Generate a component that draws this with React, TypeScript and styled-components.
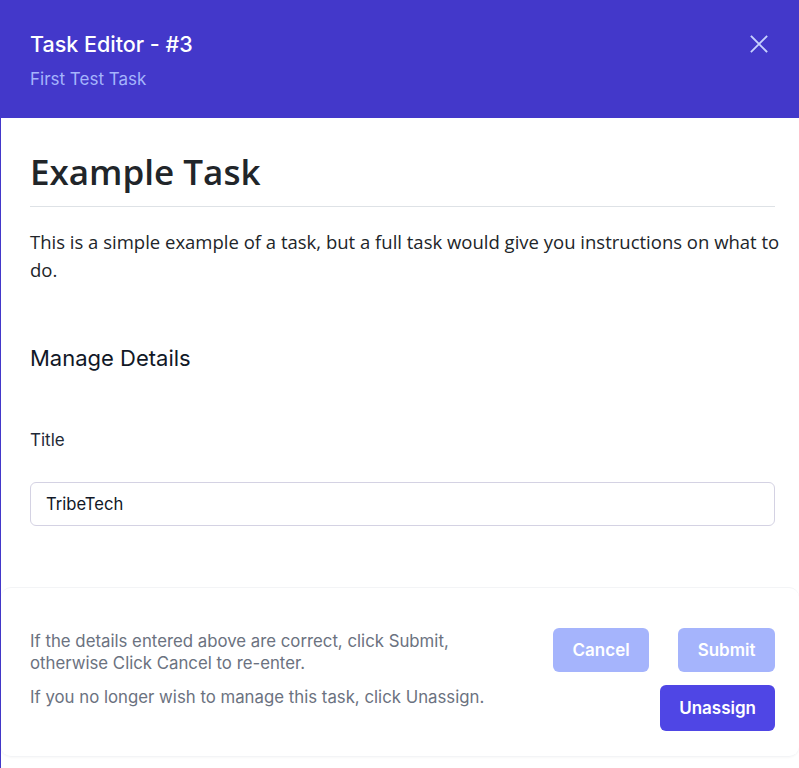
import React from "react";
import styled, { createGlobalStyle } from "styled-components";

const Global = createGlobalStyle`
  html, body { margin: 0; padding: 0; background: #ffffff; }
  body { font-family: Inter, "Noto Sans", sans-serif; -webkit-font-smoothing: antialiased; }
  * { box-sizing: border-box; }
`;

const Shell = styled.div`
  width: 799px;
  min-height: 768px;
  display: flex;
  flex-direction: column;
  background: #ffffff;
`;

const Header = styled.header`
  height: 118px;
  background: #4338ca;
  padding: 30px 30px 0 30px;
  display: flex;
  justify-content: space-between;
  align-items: flex-start;
`;

const HeaderText = styled.div`
  display: flex;
  flex-direction: column;
  gap: 10px;
`;

const HeaderTitle = styled.h2`
  margin: 0;
  font-family: Inter, sans-serif;
  font-size: 21.5px;
  line-height: 28px;
  font-weight: 500;
  color: #ffffff;
`;

const HeaderSub = styled.p`
  margin: 0;
  font-family: Inter, sans-serif;
  font-size: 17px;
  line-height: 22px;
  color: #a5b4fc;
`;

const CloseButton = styled.button`
  border: none;
  background: transparent;
  padding: 0;
  margin: 5px 1px 0 0;
  width: 18px;
  height: 18px;
  display: flex;
  color: #c7d2fe;
  cursor: pointer;
`;

const Body = styled.div`
  flex: 1;
  border-left: 1px solid #4338ca;
  display: flex;
  flex-direction: column;
`;

const Content = styled.main`
  padding: 30px 24px 0 29px;
  display: flex;
  flex-direction: column;
`;

const Heading = styled.h1`
  margin: 0;
  padding-bottom: 10px;
  border-bottom: 1px solid #dee2e6;
  font-family: "Open Sans", "Noto Sans", sans-serif;
  font-size: 35px;
  line-height: 48px;
  font-weight: 600;
  color: #212529;
`;

const Description = styled.p`
  margin: 21px -10px 0 0;
  font-family: "Open Sans", "Noto Sans", sans-serif;
  font-size: 18.5px;
  line-height: 28px;
  color: #212529;
`;

const SectionTitle = styled.h3`
  margin: 60px 0 0 0;
  font-family: Inter, sans-serif;
  font-size: 22px;
  line-height: 28px;
  font-weight: 400;
  color: #111827;
`;

const Label = styled.label`
  margin-top: 56px;
  font-family: Inter, sans-serif;
  font-size: 17px;
  line-height: 24px;
  color: #1f2937;
`;

const TextInput = styled.input`
  margin-top: 30px;
  height: 44px;
  width: 100%;
  padding: 0 15px;
  border: 1px solid #d4d2e3;
  border-radius: 6px;
  font-family: Inter, sans-serif;
  font-size: 16.6px;
  color: #111827;
  background: #ffffff;
  outline: none;
`;

const FooterCard = styled.footer`
  margin-top: 61px;
  border-top: 1px solid #f3f4f6;
  border-bottom: 1px solid #f3f4f6;
  border-radius: 10px;
  box-shadow: 0 1px 2px rgba(0, 0, 0, 0.03);
  padding: 40px 24px 25px 29px;
  display: flex;
  justify-content: space-between;
  align-items: flex-start;
`;

const FooterText = styled.div`
  width: 470px;
  display: flex;
  flex-direction: column;
  gap: 12px;
  font-family: Inter, sans-serif;
  font-size: 16.8px;
  line-height: 22px;
  color: #6b7280;
  margin-top: 2px;
`;

const FooterNote = styled.p`
  margin: 0;
`;

const Actions = styled.div`
  display: flex;
  flex-direction: column;
  align-items: flex-end;
  gap: 13px;
`;

const ActionRow = styled.div`
  display: flex;
  gap: 29px;
`;

const ActionButton = styled.button<{ $variant: "muted" | "primary" }>`
  height: ${(p) => (p.$variant === "primary" ? "46px" : "44px")};
  padding: 0 ${(p) => (p.$variant === "primary" ? "19px" : "19.5px")};
  border: none;
  border-radius: 6px;
  font-family: Inter, sans-serif;
  font-size: 17px;
  font-weight: 600;
  color: #ffffff;
  background: ${(p) => (p.$variant === "primary" ? "#4f46e5" : "#a5b4fc")};
  cursor: pointer;
`;

export default function App() {
  return (
    <Shell>
      <Global />
      <Header>
        <HeaderText>
          <HeaderTitle>Task Editor - #3</HeaderTitle>
          <HeaderSub>First Test Task</HeaderSub>
        </HeaderText>
        <CloseButton aria-label="Close">
          <svg width="18" height="18" viewBox="0 0 18 18" fill="none" stroke="currentColor" strokeWidth="1.8" strokeLinecap="square">
            <path d="M1.5 1.5L16.5 16.5M16.5 1.5L1.5 16.5" />
          </svg>
        </CloseButton>
      </Header>
      <Body>
        <Content>
          <Heading>Example Task</Heading>
          <Description>
            This is a simple example of a task, but a full task would give you instructions on what to do.
          </Description>
          <SectionTitle>Manage Details</SectionTitle>
          <Label htmlFor="title">Title</Label>
          <TextInput id="title" defaultValue="TribeTech" />
        </Content>
        <FooterCard>
          <FooterText>
            <FooterNote>If the details entered above are correct, click Submit, otherwise Click Cancel to re-enter.</FooterNote>
            <FooterNote>If you no longer wish to manage this task, click Unassign.</FooterNote>
          </FooterText>
          <Actions>
            <ActionRow>
              <ActionButton $variant="muted">Cancel</ActionButton>
              <ActionButton $variant="muted">Submit</ActionButton>
            </ActionRow>
            <ActionButton $variant="primary">Unassign</ActionButton>
          </Actions>
        </FooterCard>
      </Body>
    </Shell>
  );
}
